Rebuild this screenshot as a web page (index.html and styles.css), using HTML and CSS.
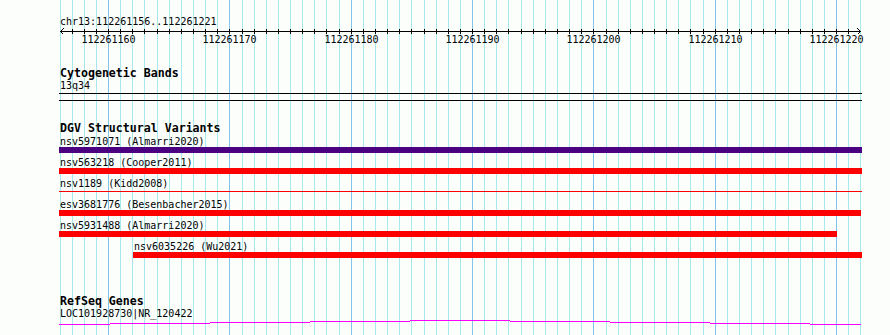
FILE: index.html
```html
<!doctype html>
<html lang="en-US">

<head>
  <meta charset="UTF-8" />
  <title>chr13:112261156..112261221</title>
  <link rel="stylesheet" href="styles.css">
</head>

<body>
  <div class="browser">
    <svg class="grid" id="grid" width="890" height="335"></svg>

    <div class="ruler">
      <div class="position">chr13:112261156..112261221</div>
      <svg class="scale" id="scale" width="890" height="22">
        <line class="axis" x1="60" y1="3.5" x2="861" y2="3.5"></line>
        <path class="arrow" d="M63.5 0.5 L60.5 3.5 L63.5 6.5"></path>
        <path class="arrow" d="M857.5 0.5 L860.5 3.5 L857.5 6.5"></path>
      </svg>
    </div>

    <div class="track cytoband">
      <div class="track-title">Cytogenetic Bands</div>
      <div class="feature-label">13q34</div>
      <div class="band"></div>
    </div>

    <div class="track dgv">
      <div class="track-title">DGV Structural Variants</div>
      <div class="row" style="margin-left: 0px; width: 803px;">
        <div class="feature-label">nsv5971071 (Almarri2020)</div>
        <div class="bar purple"></div>
      </div>
      <div class="row" style="margin-left: 0px; width: 803px;">
        <div class="feature-label">nsv563218 (Cooper2011)</div>
        <div class="bar red"></div>
      </div>
      <div class="row" style="margin-left: 0px; width: 803px;">
        <div class="feature-label">nsv1189 (Kidd2008)</div>
        <div class="bar thin"></div>
      </div>
      <div class="row" style="margin-left: 0px; width: 802px;">
        <div class="feature-label">esv3681776 (Besenbacher2015)</div>
        <div class="bar red"></div>
      </div>
      <div class="row" style="margin-left: 0px; width: 778px;">
        <div class="feature-label">nsv5931488 (Almarri2020)</div>
        <div class="bar red"></div>
      </div>
      <div class="row" style="margin-left: 74px; width: 729px;">
        <div class="feature-label">nsv6035226 (Wu2021)</div>
        <div class="bar red"></div>
      </div>
    </div>

    <div class="track refseq">
      <div class="track-title">RefSeq Genes</div>
      <div class="feature-label">LOC101928730|NR_120422</div>
      <svg class="gene" width="803" height="6" viewBox="59 0 803 6">
        <path d="M59 4.5 H110 M110 3.5 H210 M210 2.5 H310 M310 1.5 H410 M410 0.5 H510 M510 1.5 H610 M610 2.5 H710 M710 3.5 H810 M810 4.5 H861"></path>
      </svg>
    </div>
  </div>

  <script>
    var SVG_NS = "http://www.w3.org/2000/svg";
    var startBase = 112261156;
    var bases = 66;
    var grid = document.getElementById("grid");
    var scale = document.getElementById("scale");

    function baseX(i) {
      return Math.round(59.5 + i * 182 / 15);
    }

    function addLine(parent, x1, y1, x2, y2, cls) {
      var l = document.createElementNS(SVG_NS, "line");
      l.setAttribute("x1", x1);
      l.setAttribute("y1", y1);
      l.setAttribute("x2", x2);
      l.setAttribute("y2", y2);
      if (cls) l.setAttribute("class", cls);
      parent.appendChild(l);
    }

    for (var i = 0; i <= bases; i++) {
      var x = baseX(i) + 0.5;
      var major = (startBase + i) % 10 === 0;
      addLine(grid, x, 0, x, 335, major ? "major" : "");

      if (i > 0 && i < bases) {
        addLine(scale, x, 1, x, 6, "tick");
      }
      if (major) {
        var t = document.createElementNS(SVG_NS, "text");
        t.setAttribute("x", x);
        t.setAttribute("y", 15);
        t.textContent = startBase + i;
        scale.appendChild(t);
      }
    }
  </script>
</body>

</html>
```

FILE: styles.css
```css
body {
  margin: 0;
  padding: 0;
  background-color: #fcfefc;
  color: #000000;
  font-family: "DejaVu Sans Mono", "Liberation Mono", monospace;
}

.browser {
  position: relative;
  z-index: 0;
  width: 890px;
  height: 335px;
  overflow: hidden;
}

.grid {
  position: absolute;
  top: 0;
  left: 0;
  z-index: -1;
}

.grid line {
  stroke: #a8e8ee;
  stroke-width: 1;
  shape-rendering: crispEdges;
}

.grid line.major {
  stroke: #82c4ea;
}

.position {
  margin: 15px 0 0 60px;
  height: 13px;
  font-size: 10px;
  line-height: 13px;
}

.scale {
  display: block;
}

.scale line,
.scale path {
  stroke: #000000;
  stroke-width: 1;
  fill: none;
  shape-rendering: crispEdges;
}

.scale text {
  font-family: "DejaVu Sans Mono", monospace;
  font-size: 10px;
  text-anchor: middle;
  fill: #000000;
}

.track {
  padding-left: 59px;
}

.track-title {
  height: 12px;
  padding-left: 1px;
  font-size: 11.6px;
  font-weight: bold;
  line-height: 12px;
  white-space: nowrap;
}

.feature-label {
  height: 12px;
  padding-left: 1px;
  font-size: 10px;
  line-height: 13px;
  white-space: nowrap;
}

.cytoband {
  margin-top: 17px;
}

.cytoband .feature-label {
  height: 13px;
}

.band {
  width: 803px;
  height: 6px;
  margin-top: 1px;
  border-top: 1px solid #000000;
  border-bottom: 1px solid #000000;
}

.dgv {
  margin-top: 21px;
}

.dgv .track-title {
  margin-bottom: 1px;
}

.row {
  padding-bottom: 3px;
}

.bar {
  height: 6px;
}

.bar.purple {
  background-color: #4b0082;
}

.bar.red {
  background-color: #ff0000;
}

.bar.thin {
  background: linear-gradient(#ff0000, #ff0000) 0 2px / 100% 1px no-repeat;
}

.refseq {
  margin-top: 34px;
}

.refseq .feature-label {
  height: 13px;
}

.gene {
  display: block;
}

.gene path {
  stroke: #ff00ff;
  stroke-width: 1;
  fill: none;
  shape-rendering: crispEdges;
}
```
